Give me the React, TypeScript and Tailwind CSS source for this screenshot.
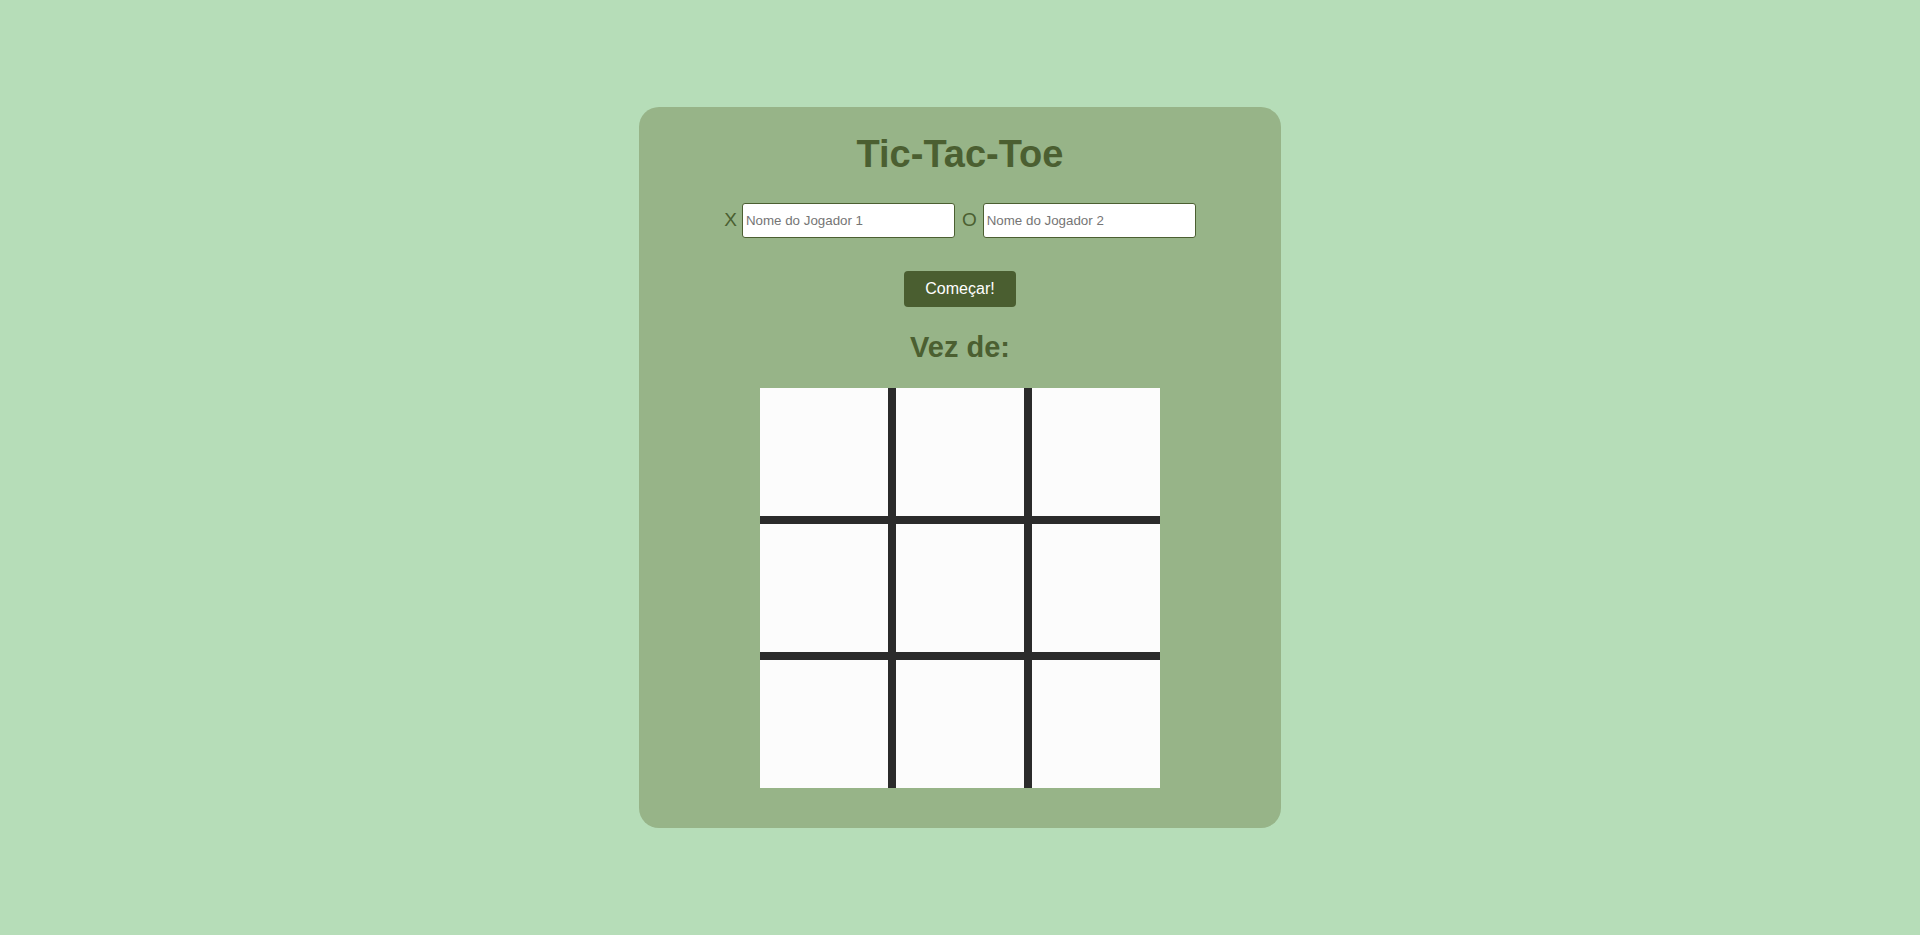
export default function App() {
  const cells = Array.from({ length: 9 }, (_, i) => i);

  return (
    <div className="min-h-screen w-full bg-[#b6ddb8] flex items-center justify-center font-['Liberation_Sans',Arial,sans-serif]">
      <div className="w-[642px] bg-[#97b488] rounded-[20px] pt-[25px] pb-[40px] flex flex-col items-center">
        <h1 className="h-[44px] leading-[44px] text-[38px] font-bold text-[#4b5f31]">Tic-Tac-Toe</h1>

        <div className="mt-[27px] flex items-center text-[19px] text-[#4b5f31]">
          <label htmlFor="p1">X</label>
          <input
            id="p1"
            type="text"
            placeholder="Nome do Jogador 1"
            className="ml-[5px] w-[213px] h-[35px] px-[3px] text-[13.33px] text-black bg-white border border-[#4b5f31] rounded-[3px] outline-none placeholder:text-[#757575]"
          />
          <label htmlFor="p2" className="ml-[7px]">O</label>
          <input
            id="p2"
            type="text"
            placeholder="Nome do Jogador 2"
            className="ml-[6px] w-[213px] h-[35px] px-[3px] text-[13.33px] text-black bg-white border border-[#4b5f31] rounded-[3px] outline-none placeholder:text-[#757575]"
          />
        </div>

        <button className="mt-[33px] w-[112px] h-[36px] bg-[#4a5e30] text-white text-[16px] rounded-[4px]">
          Começar!
        </button>

        <h2 className="mt-[23px] h-[34px] leading-[34px] text-[29px] font-bold text-[#4b5f31]">Vez de:</h2>

        <div className="mt-[24px] grid grid-cols-3 gap-[8px] bg-[#2b2b2b] w-[400px] h-[400px]">
          {cells.map((i) => (
            <div key={i} className="bg-[#fcfcfc] w-[128px] h-[128px]" />
          ))}
        </div>
      </div>
    </div>
  );
}
